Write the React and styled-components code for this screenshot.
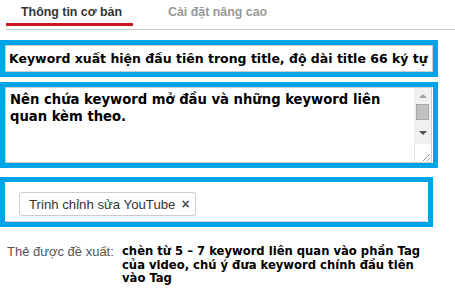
import styled, { createGlobalStyle } from "styled-components";

const Global = createGlobalStyle`
  body {
    margin: 0;
    background: #fff;
    font-family: "Liberation Sans", Arial, sans-serif;
  }
`;

const Page = styled.div`
  display: flex;
  flex-direction: column;
  width: 455px;
  height: 291px;
  overflow: hidden;
`;

/* tab strip */
const Tabs = styled.div`
  display: flex;
  margin-left: 6px;
  height: 29px;
  border-bottom: 1px solid #cccccc;
`;

const Tab = styled.div`
  display: flex;
  align-items: center;
  box-sizing: border-box;
  width: ${(p) => (p.active ? "127px" : "auto")};
  height: 26px;
  padding-left: ${(p) => (p.active ? "15px" : "35px")};
  font-size: 12.4px;
  font-weight: bold;
  white-space: nowrap;
  color: ${(p) => (p.active ? "#333333" : "#999999")};
  border-bottom: 3px solid ${(p) => (p.active ? "#cc181e" : "transparent")};
  margin-bottom: -1px;
`;

/* highlighted field frames */
const Frame = styled.div`
  display: flex;
  box-sizing: border-box;
  width: ${(p) => p.w}px;
  height: ${(p) => p.h}px;
  margin-top: ${(p) => p.mt}px;
  border: 5px solid #00a2e8;
`;

const BoldText = styled.div`
  font-family: "DejaVu Sans", Verdana, sans-serif;
  font-weight: bold;
  color: #000;
`;

const TitleInput = styled(BoldText)`
  flex: 1;
  display: flex;
  align-items: center;
  border: 1px solid #cccccc;
  padding-left: 3px;
  font-size: 12.5px;
  white-space: nowrap;
  overflow: hidden;
`;

const TextArea = styled.div`
  flex: 1;
  display: flex;
  border: 1px solid #cccccc;
  margin-right: 1px;
`;

const AreaText = styled(BoldText)`
  flex: 1;
  padding: 3px 0 0 4px;
  font-size: 13.2px;
  line-height: 17px;
`;

const ScrollBar = styled.div`
  display: flex;
  flex-direction: column;
  width: 17px;
`;

const Track = styled.div`
  flex: 1;
  display: flex;
  flex-direction: column;
  align-items: center;
  background: #f0f0f0;
  padding-top: 6px;
`;

const Arrow = styled.div`
  width: 0;
  height: 0;
  border-left: 4px solid transparent;
  border-right: 4px solid transparent;
  ${(p) =>
    p.up
      ? "border-bottom: 4px solid #a3a3a3;"
      : "border-top: 4px solid #505050;"}
`;

const Thumb = styled.div`
  width: 13px;
  height: 16px;
  margin: 6px 0 11px;
  background: #c1c1c1;
  border: 1px solid #a8a8a8;
  box-sizing: border-box;
`;

const Corner = styled.div`
  display: flex;
  align-items: flex-end;
  justify-content: flex-end;
  height: 18px;
  border-left: 1px solid #e6e6e6;
  background: #fff;
`;

const TagField = styled.div`
  flex: 1;
  display: flex;
  align-items: flex-start;
  padding: 10px 0 0 14px;
  margin-right: 2px;
  border-bottom: 1px solid #d2d2d2;
`;

const Chip = styled.div`
  display: flex;
  align-items: center;
  gap: 6px;
  height: 22px;
  padding: 0 5px 0 9px;
  border: 1px solid #cccccc;
  border-radius: 3px;
  font-size: 13.2px;
  color: #333;
`;

const ChipX = styled.span`
  font-size: 14px;
  font-weight: bold;
  color: #555;
`;

/* suggestion row */
const Hint = styled.div`
  display: flex;
  margin-top: 18px;
  padding-left: 7px;
`;

const HintLabel = styled.div`
  width: 115px;
  flex-shrink: 0;
  font-size: 13px;
  color: #555555;
  line-height: 14px;
`;

const HintText = styled(BoldText)`
  width: 305px;
  font-size: 11.6px;
  line-height: 13.5px;
`;

export default function App() {
  return (
    <Page>
      <Global />
      <Tabs>
        <Tab active>Thông tin cơ bản</Tab>
        <Tab>Cài đặt nâng cao</Tab>
      </Tabs>
      <Frame w={438} h={37} mt={10}>
        <TitleInput>
          Keyword xuất hiện đầu tiên trong title, độ dài title 66 ký tự
        </TitleInput>
      </Frame>
      <Frame w={438} h={86} mt={5}>
        <TextArea>
          <AreaText>
            Nên chứa keyword mở đầu và những keyword liên quan kèm theo.
          </AreaText>
          <ScrollBar>
            <Track>
              <Arrow up />
              <Thumb />
              <Arrow />
            </Track>
            <Corner>
              <svg width="10" height="10" viewBox="0 0 10 10">
                <path d="M9 2 L2 9 M9 6 L6 9" stroke="#9a9a9a" strokeWidth="1" />
              </svg>
            </Corner>
          </ScrollBar>
        </TextArea>
      </Frame>
      <Frame w={433} h={50} mt={9}>
        <TagField>
          <Chip>
            Trinh chỉnh sửa YouTube <ChipX>×</ChipX>
          </Chip>
        </TagField>
      </Frame>
      <Hint>
        <HintLabel>Thẻ được đề xuất:</HintLabel>
        <HintText>
          chèn từ 5 – 7 keyword liên quan vào phần Tag của video, chú ý đưa
          keyword chính đầu tiên vào Tag
        </HintText>
      </Hint>
    </Page>
  );
}
